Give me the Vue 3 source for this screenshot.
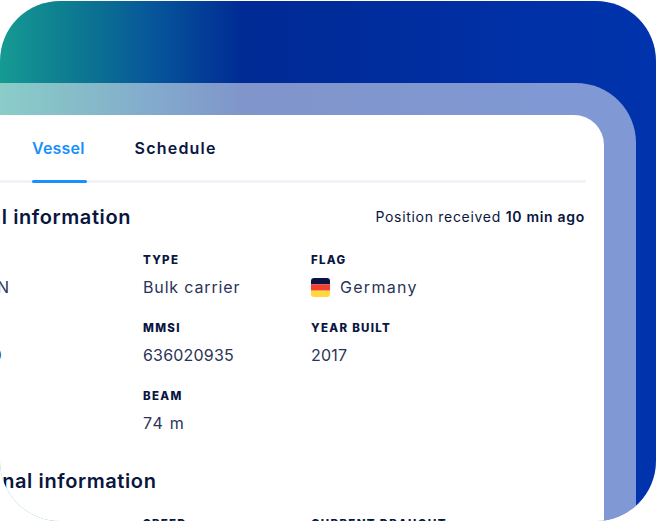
<template>
  <div class="stage">
    <div class="panel">
      <div class="card">
        <nav class="tabs">
          <a class="tab active">Vessel</a>
          <a class="tab schedule">Schedule</a>
        </nav>

        <div class="body">
          <section class="section">
            <div class="section-head">
              <h2 class="general">General information</h2>
              <p class="received">Position received <b>10 min ago</b></p>
            </div>
            <div class="grid">
              <div v-for="item in general" :key="item.label" class="field">
                <span class="label">{{ item.label }}</span>
                <span class="value" :class="item.kind">
                  <svg v-if="item.flag" class="flag" viewBox="0 0 18 18" aria-hidden="true">
                    <rect width="18" height="6" fill="#0b1440" />
                    <rect y="6" width="18" height="6" fill="#f2402f" />
                    <rect y="12" width="18" height="6" fill="#ffd83d" />
                  </svg>
                  {{ item.value }}
                </span>
              </div>
            </div>
          </section>

          <section class="section second">
            <div class="section-head">
              <h2 class="operational">Operational information</h2>
            </div>
            <div class="grid">
              <div v-for="item in operational" :key="item.label" class="field">
                <span class="label">{{ item.label }}</span>
              </div>
            </div>
          </section>
        </div>
      </div>
    </div>
  </div>
</template>

<script setup>
const general = [
  { label: 'NAME', value: 'SEA LION' },
  { label: 'TYPE', value: 'Bulk carrier' },
  { label: 'FLAG', value: 'Germany', flag: true, kind: 'wide' },
  { label: 'IMO', value: '9301469' },
  { label: 'MMSI', value: '636020935', kind: 'numeric' },
  { label: 'YEAR BUILT', value: '2017', kind: 'numeric' },
  { label: 'LENGTH', value: '399 m' },
  { label: 'BEAM', value: '74 m', kind: 'wide' }
];

const operational = [
  { label: 'STATUS' },
  { label: 'SPEED' },
  { label: 'CURRENT DRAUGHT' }
];
</script>

<style>
html,
body {
  margin: 0;
  background: #fff;
}
</style>

<style scoped>
.stage {
  box-sizing: border-box;
  width: 656px;
  height: 520px;
  margin-top: 1px;
  padding-top: 82px;
  border-radius: 60px;
  overflow: hidden;
  background: linear-gradient(90deg, #169a93 0, #0e8091 60px, #0b6f92 100px, #07579a 150px, #033f97 200px, #002a95 245px, #0033ad 100%);
  font-family: Inter, "Open Sans", sans-serif;
  color: #0a1540;
}

.panel {
  box-sizing: border-box;
  height: 438px;
  margin-right: 20px;
  padding: 32px 32px 0 0;
  border-top-right-radius: 60px;
  background: rgba(255, 255, 255, 0.5);
}

.card {
  height: 406px;
  padding-right: 18px;
  overflow: hidden;
  border-top-right-radius: 30px;
  background: #fff;
}

.tabs {
  display: flex;
  gap: 50px;
  height: 65px;
  padding-left: 32px;
  border-bottom: 3px solid #f0f3f7;
}

.tab {
  position: relative;
  padding-top: 23px;
  font-size: 16px;
  line-height: 20px;
  font-weight: 600;
  letter-spacing: 0.2px;
}

.tab.schedule {
  letter-spacing: 1.2px;
}

.tab.active {
  color: #1a90ff;
}

.tab.active::after {
  content: "";
  position: absolute;
  left: 0;
  right: -2px;
  bottom: -3px;
  height: 3px;
  border-radius: 2px;
  background: #1a90ff;
}

.body {
  margin-left: -70px;
}

.section-head {
  display: flex;
  justify-content: space-between;
  align-items: center;
  height: 24px;
  margin-top: 22px;
}

h2 {
  margin: -1px 0 0;
  font-size: 20px;
  line-height: 24px;
  font-weight: 600;
  letter-spacing: 0.6px;
}

.general {
  margin-left: -2px;
}

.operational {
  margin-top: 0;
  margin-left: -16px;
}

.received {
  margin: 0 1px 0 0;
  font-size: 14px;
  line-height: 20px;
  letter-spacing: 0.7px;
}

.received b {
  font-weight: 600;
}

.grid {
  display: grid;
  grid-template-columns: 213px 168px 1fr;
  grid-auto-rows: 68px;
  margin-top: 23px;
}

.second .section-head {
  margin-top: 13px;
}

.second .grid {
  margin-top: 23px;
}

.field {
  display: flex;
  flex-direction: column;
  gap: 8px;
  padding-top: 1px;
}

.label {
  font-size: 11.5px;
  line-height: 14px;
  font-weight: 800;
  letter-spacing: 1.3px;
}

.value {
  display: flex;
  align-items: center;
  gap: 10px;
  min-height: 24px;
  font-size: 16px;
  line-height: 24px;
  letter-spacing: 0.85px;
  color: #2b3358;
}

.value.numeric {
  letter-spacing: 0.2px;
}

.value.wide {
  letter-spacing: 1.3px;
}

.flag {
  width: 19px;
  height: 19px;
  border-radius: 3px;
}
</style>
